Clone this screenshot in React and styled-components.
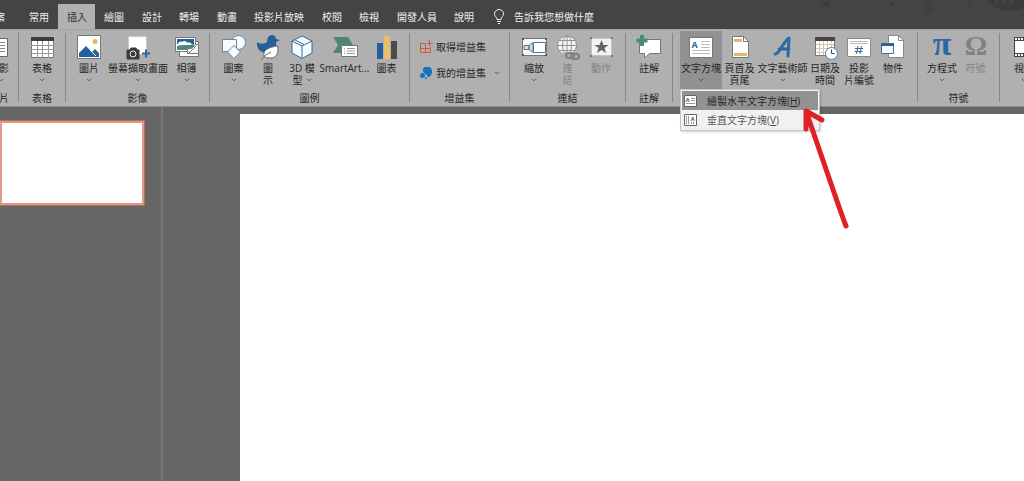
import { Fragment } from 'react'
import styled, { createGlobalStyle, css } from 'styled-components'

const GlobalStyle = createGlobalStyle`
  * {
    box-sizing: border-box;
  }

  body {
    margin: 0;
    overflow: hidden;
    background: #666;
    color: #262626;
    font-family: 'Open Sans', 'Noto Sans CJK TC', sans-serif;
    font-size: 10px;
    line-height: 12px;
  }

  button {
    border: 0;
    padding: 0;
    background: none;
    color: inherit;
    font: inherit;
  }
`

const Page = styled.div`
  min-height: 100vh;
  display: flex;
  flex-direction: column;
`

const TitleBar = styled.header`
  position: relative;
  display: flex;
  align-items: flex-end;
  height: 29px;
  background: #444;
  color: #f0f0f0;
  overflow: hidden;
`

const Tabs = styled.nav`
  display: flex;
  flex: none;
  margin-left: -24px;
`

const Tab = styled.button`
  flex: none;
  height: 25px;
  padding: 0 ${({ $wide }) => ($wide ? '9px' : '8px')} 0 9px;
  white-space: nowrap;

  ${({ $first }) => $first && css`
    padding-right: 15px;
  `}

  ${({ $active }) => $active && css`
    background: #b1b1b1;
    color: #333;
  `}
`

const Search = styled.button`
  display: flex;
  align-items: center;
  gap: 9px;
  height: 25px;
  margin-left: 10px;
  white-space: nowrap;
`

const Doodle = styled.svg`
  position: absolute;
  top: 0;
  right: 0;
`

const Ribbon = styled.div`
  display: flex;
  height: 78px;
  margin-left: -30px;
  background: #b0b0b0;
  border-top: 1px solid #a4a4a4;
  border-bottom: 1px solid #8a8a8a;
`

const Group = styled.section`
  display: flex;
  flex: none;
  flex-direction: column;
  margin: 3px 0 4px;
  padding: 0 ${({ $pad = 4 }) => $pad}px;
  border-right: 1px solid #868686;
`

const Tools = styled.div`
  display: flex;
  flex: none;
  height: 58px;
  margin-top: -2px;
`

const GroupLabel = styled.h2`
  flex: none;
  margin: 3px 0 0;
  font-size: 10px;
  font-weight: 400;
  line-height: 12px;
  text-align: center;
`

const Tool = styled.button`
  display: flex;
  flex: none;
  flex-direction: column;
  align-items: center;
  width: ${({ $width = 34 }) => $width}px;
  height: 58px;
  padding-top: 4px;
  background: ${({ $open }) => ($open ? '#919191' : 'none')};

  &:disabled {
    color: #838383;
  }
`

const ToolText = styled.span`
  display: flex;
  align-items: center;
  justify-content: center;
  gap: 3px;
  height: 12px;
  white-space: nowrap;

  svg + & {
    margin-top: 3px;
  }
`

const MenuAnchor = styled.div`
  position: relative;
`

const Menu = styled.div`
  position: absolute;
  z-index: 1;
  top: 58px;
  left: 0;
  width: 140px;
  padding: 1px;
  background: #f1f1f1;
  border: 1px solid #c6c6c6;
  box-shadow: 1px 1px 2px #0003;
`

const MenuItem = styled.button`
  display: flex;
  align-items: center;
  gap: 10px;
  width: 100%;
  height: 19px;
  padding-left: 2px;
  white-space: nowrap;
  color: ${({ $hover }) => ($hover ? '#262626' : '#555')};
  background: ${({ $hover }) => ($hover ? '#929292' : 'none')};
`

const Arrow = styled.svg`
  position: absolute;
  z-index: 2;
  top: 70px;
  left: 118px;
  pointer-events: none;
`

const AddIns = styled.div`
  display: flex;
  flex: none;
  flex-direction: column;
  gap: 12px;
  height: 58px;
  margin-top: -2px;
  padding-top: 9px;
`

const AddIn = styled.button`
  display: flex;
  align-items: center;
  gap: 3px;
  height: 14px;
  white-space: nowrap;

  svg:last-child:not(:first-child) {
    margin-left: 5px;
  }
`

const Workspace = styled.main`
  display: flex;
  flex: 1;
`

const Thumbnails = styled.aside`
  flex: none;
  width: 163px;
  padding-top: 13px;
  border-right: 2px solid #777;
`

const Thumbnail = styled.button`
  display: block;
  width: 146px;
  height: 86px;
  margin-left: -1px;
  background: #fff;
  border: 1px solid #c4694f;
  box-shadow: inset 0 0 0 2px #dc9a8c;
`

const Canvas = styled.div`
  flex: 1;
  margin: 7px 0 0 77px;
  background: #fff;
`

const Chevron = () => (
  <svg width="6" height="4" viewBox="0 0 6 4" fill="none" stroke="#555">
    <path d="M1 .8 3 2.8 5 .8" />
  </svg>
)

const icons = {
  slide: (
    <>
      <path d="M-2 3.500h27.500v18H-2z" fill="#fff" stroke="#666" />
      <path d="M13 7.500h10M13 10.500h10M13 13.500h10M13 16.500h10" stroke="#888" />
    </>
  ),
  table: (
    <>
      <path d="M1.500 2.500h22v20h-22z" fill="#fff" stroke="#777" />
      <path d="M1 2h23v4H1z" fill="#3d3d3d" />
      <path d="M1 10.500h23M1 14.500h23M1 18.500h23M7.500 6v17M12.500 6v17M18.500 6v17" stroke="#999" />
    </>
  ),
  picture: (
    <>
      <path d="M.5.500h23v23H.5z" fill="#fff" stroke="#777" />
      <circle cx="18" cy="6.500" r="2.500" fill="#e6b95c" />
      <path d="M2 22v-4l7-7 6 6 3-3 4 4v4z" fill="#25609b" />
      <path d="m13 15 6 6" stroke="#fff" />
    </>
  ),
  screenshot: (
    <>
      <path d="M2.500 1.500h18v18h-18z" fill="#fff" stroke="#bbb" strokeDasharray="1 1" />
      <path d="M1 15h3l1-2h5l1 2h2v9H1z" fill="#3b3b3b" stroke="#3b3b3b" strokeLinejoin="round" />
      <circle cx="7" cy="19" r="3" fill="#3b3b3b" stroke="#eee" />
      <path d="M16 18.500h8M20 14.500v8" stroke="#2a66a5" strokeWidth="2" />
    </>
  ),
  album: (
    <>
      <path d="M4.500 6.500h19v15h-19z" fill="#fff" stroke="#777" />
      <path d="M.5 2.500h20v14H.5z" fill="#fff" stroke="#777" />
      <path d="M2 4h17v5H2z" fill="#25609b" />
      <path d="M3 9c0-2 3-3 4-2 2-2 5-1 5 1 2-1 4 0 5 1z" fill="#fff" />
      <path d="M2 11c5-2 10 0 17-2v3l-6 3H2z" fill="#4a8a76" />
      <path d="M12.500 18.500v-5h4l4-4h3v9z" fill="#f4f4f4" stroke="#777" />
      <path d="m14 18 7-7" stroke="#777" />
    </>
  ),
  shapes: (
    <>
      <circle cx="16.500" cy="7.500" r="7" fill="#f8fcff" stroke="#6285a3" />
      <path d="M.5 4.500h14v12H.5z" fill="#f8fcff" stroke="#6285a3" />
      <path d="m12 10.500 6.500 6.500-6.500 6.500L5.500 17z" fill="#f8fcff" stroke="#6285a3" />
    </>
  ),
  bird: (
    <>
      <path d="M1 7c3 2 7 2 10 0 0-4 2-7 5-7 3 0 4 2 4 4l4 1-4 2c1 8-3 11-9 11C5 18 0 14 1 7z" fill="#25609b" />
      <path d="M8.500 22c-3-7 5-10 13-11 2 8-2 14-11 11.500z" fill="#fff" stroke="#686868" />
      <path d="M5 25c3-4 6-6 10-8" fill="none" stroke="#686868" />
    </>
  ),
  cube: (
    <>
      <path d="m12 1 10 5v12l-10 5.500L2 18V6z" fill="#f7fcff" stroke="#326b9c" strokeLinejoin="round" />
      <path d="m2 6 10 5 10-5M12 11v12" fill="none" stroke="#326b9c" />
      <path d="m5 5 9 4.500" stroke="#326b9c" />
    </>
  ),
  smartart: (
    <>
      <path d="M0 2h15l5 8-5 8H0l5-8z" fill="#4b8872" />
      <path d="M8.500 10.500h16v11h-16z" fill="#fff" stroke="#777" />
      <path d="M11 13.500h1M14 13.500h8M11 16h1M14 16h8M11 18.500h1M14 18.500h8" stroke="#999" />
    </>
  ),
  chart: (
    <>
      <path d="M2 8h6v16H2z" fill="#25609b" />
      <path d="M9 1h6v23H9z" fill="#e8bf6a" />
      <path d="M16 6h6v18h-6z" fill="#4b4b4b" />
    </>
  ),
  zoom: (
    <>
      <path d="M.5 3.500h24v17H.5z" fill="#f8f8f8" stroke="#777" />
      <path d="M2 10.500h5v4H2zM7 10.500l4-3v10l-4-3z" fill="#cfe0ea" stroke="#52788e" />
      <path d="M11.500 7.500h12v10h-12z" fill="#fff" stroke="#52788e" />
      <path d="M0 3h2v2H0zM23 3h2v2h-2zM0 19h2v2H0zM23 19h2v2h-2z" fill="#445f70" />
    </>
  ),
  link: (
    <>
      <circle cx="11" cy="10.500" r="9.500" fill="#f4f4f4" stroke="#929292" />
      <ellipse cx="11" cy="10.500" rx="4.500" ry="9.500" fill="none" stroke="#929292" />
      <path d="M1 10.500h20M3 5.500h16M3 15.500h16M11 1v19" fill="none" stroke="#929292" />
      <path d="M8 17h16v8H8z" fill="#b0b0b0" />
      <g fill="none" stroke="#808080" strokeWidth="2">
        <rect x="10" y="18" width="8" height="5" rx="2.500" />
        <rect x="15" y="19" width="8" height="5" rx="2.500" />
      </g>
    </>
  ),
  action: (
    <>
      <path d="M2.500 3.500h20v17h-20z" fill="#f3f3f3" stroke="#bbb" strokeDasharray="2 1" />
      <path d="m12.500 5 2 5h5l-4 3 1.500 5-4.500-3L8 18l1.500-5-4-3h5z" fill="#666" />
      <path d="M1 2h2v2H1zM22 2h2v2h-2zM1 20h2v2H1zM22 20h2v2h-2z" fill="#777" />
    </>
  ),
  comment: (
    <>
      <path d="M2.500 4.500h21v14h-11L7.500 23v-4.500h-5z" fill="#fff" stroke="#777" />
      <path d="M5 0v11M-.5 5.500h11" stroke="#4b8b76" strokeWidth="4" />
    </>
  ),
  textbox: (
    <>
      <path d="M.5 2.500h23v20H.5z" fill="#fff" stroke="#777" />
      <text x="2.500" y="13" fontFamily="Open Sans" fontWeight="700" fontSize="9" fill="#2b6699">A</text>
      <path d="M12 6.500h9M12 9.500h9M12 12.500h9M3 15.500h18M3 18.500h18" stroke="#bbb" />
    </>
  ),
  header: (
    <>
      <path d="M4.500 1.500h11l5 5v16h-16z" fill="#fff" stroke="#777" />
      <path d="M15.500 1.500v5h5" fill="none" stroke="#777" />
      <path d="M6 4h8v3H6zM6 18h13v3H6z" fill="#e1b763" />
    </>
  ),
  wordart: (
    <path d="M4 19c5 0 7-11 14-16 0 6-1 12-1 18M8 14h10" fill="none" stroke="#2c68a5" strokeWidth="3" strokeLinecap="round" strokeLinejoin="round" />
  ),
  date: (
    <>
      <path d="M2.500 2.500h19v18h-19z" fill="#fff" stroke="#777" />
      <path d="M2 2h20v4H2z" fill="#444" />
      <path d="M3 9.500h18M3 13.500h18M3 17.500h18M6.500 6v14M10.500 6v14M14.500 6v14M18.500 6v14" stroke="#d5c3b3" />
      <circle cx="18.500" cy="18.500" r="6" fill="#fff" stroke="#4d7fa8" />
      <path d="M18.500 14.500v4h3" fill="none" stroke="#444" />
    </>
  ),
  number: (
    <>
      <path d="M.5 3.500h23v18H.5z" fill="#fff" stroke="#888" />
      <path d="M3 6.500h18M3 8.500h18" stroke="#bbb" />
      <path d="M8 13.500h8M7.500 16.500h8M11 11l-1.500 8M14.500 11 13 19" stroke="#386b94" />
    </>
  ),
  object: (
    <>
      <path d="M7.500.500h10l5 5v17h-15z" fill="#fff" stroke="#888" />
      <path d="M17.500.500v5h5" fill="none" stroke="#888" />
      <path d="M.5 8.500h12v10H.5z" fill="#f8fcff" stroke="#39729e" />
      <path d="M0 8h13v3H0z" fill="#2c6697" />
    </>
  ),
  equation: (
    <text x="12" y="20" textAnchor="middle" fontFamily="Liberation Serif" fontWeight="700" fontSize="34" fill="#2d66a1">π</text>
  ),
  symbol: (
    <text x="12" y="20" textAnchor="middle" fontFamily="Liberation Serif" fontWeight="700" fontSize="28" fill="#808080">Ω</text>
  ),
  video: (
    <>
      <path d="M2 2h22v20H2z" fill="#444" />
      <path d="M3 6h20v12H3z" fill="#fff" />
      <path d="M3 4h20M3 20h20" stroke="#fff" strokeWidth="2" strokeDasharray="2 1" />
    </>
  ),
  audio: (
    <path d="M2 9h5l6-6v18l-6-6H2zM17 8c2 2 2 6 0 8" fill="#fff" stroke="#666" />
  ),
}

const Icon = ({ name }) => (
  <svg width="24" height="24" viewBox="0 0 24 24" overflow="visible" aria-hidden="true">
    {icons[name]}
  </svg>
)

const tabs = ['檔案', '常用', '插入', '繪圖', '設計', '轉場', '動畫', '投影片放映', '校閱', '檢視', '開發人員', '說明']

const groupsBefore = [
  { label: '投影片', pad: 3, tools: [{ icon: 'slide', width: 42, lines: ['新投影', '片'], menu: true }] },
  { label: '表格', pad: 3, tools: [{ icon: 'table', width: 40, lines: ['表格'], menu: true }] },
  {
    label: '影像',
    tools: [
      { icon: 'picture', width: 38, lines: ['圖片'], menu: true },
      { icon: 'screenshot', width: 60, lines: ['螢幕擷取畫面'], menu: true },
      { icon: 'album', width: 37, lines: ['相簿'], menu: true },
    ],
  },
  {
    label: '圖例',
    pad: 6,
    tools: [
      { icon: 'shapes', width: 35, lines: ['圖案'], menu: true },
      { icon: 'bird', lines: ['圖', '示'] },
      { icon: 'cube', lines: ['3D 模', '型'], menu: true },
      { icon: 'smartart', width: 51, lines: ['SmartArt...'] },
      { icon: 'chart', width: 33, lines: ['圖表'] },
    ],
  },
]

const groupsAfter = [
  {
    label: '連結',
    pad: 7,
    tools: [
      { icon: 'zoom', lines: ['縮放'], menu: true },
      { icon: 'link', width: 33, lines: ['連', '結'], disabled: true },
      { icon: 'action', lines: ['動作'], disabled: true },
    ],
  },
  { label: '註解', pad: 3, tools: [{ icon: 'comment', width: 40, lines: ['註解'] }] },
  {
    label: '',
    pad: 7,
    tools: [
      { icon: 'textbox', width: 42, lines: ['文字方塊'], menu: true, open: true },
      { icon: 'header', width: 35, lines: ['頁首及', '頁尾'] },
      { icon: 'wordart', width: 51, lines: ['文字藝術師'], menu: true },
      { icon: 'date', lines: ['日期及', '時間'] },
      { icon: 'number', lines: ['投影', '片編號'] },
      { icon: 'object', lines: ['物件'] },
    ],
  },
  {
    label: '符號',
    pad: 7,
    tools: [
      { icon: 'equation', lines: ['方程式'], menu: true },
      { icon: 'symbol', width: 33, lines: ['符號'], disabled: true },
    ],
  },
  {
    label: '媒體',
    pad: 4,
    tools: [
      { icon: 'video', width: 40, lines: ['視訊'], menu: true },
      { icon: 'audio', width: 40, lines: ['音訊'], menu: true },
    ],
  },
]

const TextBoxMenu = () => (
  <>
    <Menu role="menu">
      <MenuItem role="menuitem" $hover>
        <svg width="13" height="12" viewBox="0 0 13 12">
          <path d="M.5.500h12v11H.5z" fill="#fff" stroke="#666" />
          <text x="1.500" y="7" fontFamily="Open Sans" fontWeight="700" fontSize="6" fill="#2b6699">A</text>
          <path d="M7 3.500h4M7 5.500h4M2 8.500h9" stroke="#999" />
        </svg>
        <span>繪製水平文字方塊(<u>H</u>)</span>
      </MenuItem>
      <MenuItem role="menuitem">
        <svg width="13" height="12" viewBox="0 0 13 12">
          <path d="M.5.500h12v11H.5z" fill="#fff" stroke="#666" />
          <text x="6.500" y="7" fontFamily="Open Sans" fontWeight="700" fontSize="6" fill="#2b6699">A</text>
          <path d="M2.500 2v8M4.500 2v8M7.500 8v2M9.500 8v2" stroke="#999" />
        </svg>
        <span>垂直文字方塊(<u>V</u>)</span>
      </MenuItem>
    </Menu>
    <Arrow width="60" height="132" viewBox="0 0 60 132" fill="none" stroke="#df2127" strokeWidth="5" strokeLinecap="round" strokeLinejoin="round">
      <path d="M48 125C41 107 36 91 30 74L8 10M8 28V10L24 19" />
    </Arrow>
  </>
)

const ToolButton = ({ tool }) => {
  const { icon, width, lines, menu, open, disabled } = tool
  return (
    <Tool type="button" $width={width} $open={open} disabled={disabled}>
      <Icon name={icon} />
      <ToolText>{lines[0]}</ToolText>
      <ToolText>
        {lines[1]}
        {menu && <Chevron />}
      </ToolText>
    </Tool>
  )
}

const RibbonGroup = ({ group }) => (
  <Group $pad={group.pad}>
    <Tools>
      {group.tools.map((tool) => (
        <Fragment key={tool.icon}>
          {tool.open ? (
            <MenuAnchor>
              <ToolButton tool={tool} />
              <TextBoxMenu />
            </MenuAnchor>
          ) : (
            <ToolButton tool={tool} />
          )}
        </Fragment>
      ))}
    </Tools>
    {group.label && <GroupLabel>{group.label}</GroupLabel>}
  </Group>
)

const App = () => (
  <Page>
    <GlobalStyle />
    <TitleBar>
      <Tabs>
        {tabs.map((tab, i) => (
          <Tab key={tab} type="button" $first={i === 0} $wide={i % 2 === 1} $active={tab === '插入'}>
            {tab}
          </Tab>
        ))}
      </Tabs>
      <Search type="button">
        <svg width="12" height="15" viewBox="0 0 12 15" fill="none" stroke="#f0f0f0">
          <path d="M4 10.500C4 8 1.500 7.500 1.500 5a4.500 4.500 0 0 1 9 0C10.500 7.500 8 8 8 10.500zM4 12.500h4M5 14.500h2" />
        </svg>
        告訴我您想做什麼
      </Search>
      <Doodle width="210" height="15" viewBox="0 0 210 15" fill="#3b3b3b">
        <path d="m4 1 6 3 7-3-3 4 5 2-7-1-3 2V5zM76 3h4v3h-4zM154 3l4-3-1 6zM174 0h36v7c-10 6-29 5-36-7z" />
        <path d="M110 0v4h8V0M109 6h10M111 9h8M110 12h10M114 0v13" fill="none" stroke="#3b3b3b" />
        <path d="M183 0v4M190 0v5M197 0v4" stroke="#444" strokeWidth="3" />
      </Doodle>
    </TitleBar>
    <Ribbon>
      {groupsBefore.map((group) => (
        <RibbonGroup key={group.label} group={group} />
      ))}
      <Group $pad={9}>
        <AddIns>
          <AddIn type="button">
            <svg width="14" height="14" viewBox="0 0 14 14" fill="none" stroke="#cc5a3c">
              <path d="M1.500 3.500h5v9h-5zM6.500 8.500h5v4h-5zM1.500 8.500h5M11.500 8V7M8 3.500h6M10.500 0v6" />
            </svg>
            取得增益集
          </AddIn>
          <AddIn type="button">
            <svg width="14" height="14" viewBox="0 0 14 14" fill="#1473bd">
              <path d="M5 1h4c3 0 4 2 4 5s-2 5-4 5L7 8C4 8 3 3 5 1z" />
              <circle cx="3.500" cy="9.500" r="2.500" />
              <circle cx="7" cy="12" r="1" />
            </svg>
            我的增益集
            <Chevron />
          </AddIn>
        </AddIns>
        <GroupLabel>增益集</GroupLabel>
      </Group>
      {groupsAfter.map((group) => (
        <RibbonGroup key={group.label} group={group} />
      ))}
    </Ribbon>
    <Workspace>
      <Thumbnails>
        <Thumbnail type="button" aria-label="投影片 1" />
      </Thumbnails>
      <Canvas />
    </Workspace>
  </Page>
)

export default App
